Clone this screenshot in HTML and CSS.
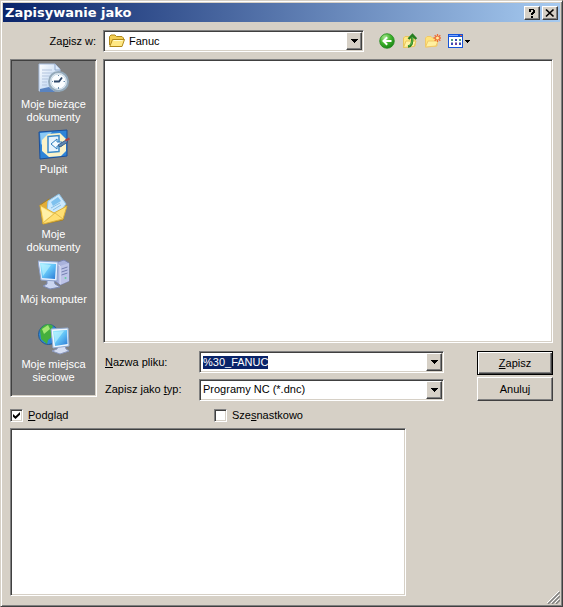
FILE: index.html
```html
<!DOCTYPE html>
<html lang="pl">
<head>
<meta charset="utf-8">
<meta name="viewport" content="width=device-width, initial-scale=1">
<title>Zapisywanie jako</title>
<link rel="stylesheet" href="styles.css">
</head>
<body>
<form class="dialog" onsubmit="return false">
  <header class="titlebar">
    <h1 class="title">Zapisywanie jako</h1>
    <button class="caption-button" type="button" aria-label="Pomoc">
      <svg width="10" height="10" viewBox="0 0 10 10" shape-rendering="crispEdges"><path d="M2 1h5v1h1v3H7v1H6v1H4V5h1V4h1V2H4v2H2zM4 8h2v2H4z"/></svg>
    </button>
    <button class="caption-button caption-close" type="button" aria-label="Zamknij">
      <svg width="10" height="10" viewBox="0 0 10 10"><path d="M1 1.5l7.5 7M8.5 1.5l-7.5 7" stroke="#000" stroke-width="1.7"/></svg>
    </button>
  </header>

  <div class="content">
    <div class="lookin">
      <label class="lookin-label" for="folder">Za<u>p</u>isz w:</label>
      <div class="combo combo-folder">
        <svg class="folder-icon" width="16" height="14" viewBox="0 0 16 14"><path d="M.5 11V2.5L2 1h4l1.500 1.500H13L14.500 4v2" fill="#f4ce52" stroke="#b18919"/><path d="M.8 12.500L3.500 5.500h12L13 12.500z" fill="#ffe884" stroke="#b18919"/><path d="M4.500 6.500h9" stroke="#fffbd0"/></svg>
        <select class="field" id="folder"><option>Fanuc</option></select>
        <span class="arrow"><svg width="7" height="4" viewBox="0 0 7 4" shape-rendering="crispEdges"><path d="M0 0h7v1H6v1H5v1H4v1H3V3H2V2H1V1H0z"/></svg></span>
      </div>
      <div class="tools">
        <button class="tool" type="button" aria-label="Wstecz">
          <svg width="16" height="16" viewBox="0 0 16 16"><defs><radialGradient id="green" cx=".35" cy=".25" r=".8"><stop offset="0" stop-color="#a5e58e"/><stop offset=".5" stop-color="#42b62d"/><stop offset="1" stop-color="#168215"/></radialGradient></defs><circle cx="8" cy="8" r="7.300" fill="url(#green)" stroke="#258b20" stroke-width=".8"/><path d="M12.500 8H5M8.200 4.300L4.500 8l3.700 3.700" fill="none" stroke="#fff" stroke-width="2"/></svg>
        </button>
        <button class="tool" type="button" aria-label="Do góry o jeden poziom">
          <svg width="16" height="16" viewBox="0 0 16 16"><path d="M1.500 14.500V5L3 3.500h4L8.500 5H13v8z" fill="#ffe784" stroke="#e9c55c"/><path d="M1.500 14.500L4 8h10l-2 5.500z" fill="#fff2a5" stroke="#e9c55c"/><path d="M6 13.500c3.500-.5 4.500-3 4.300-10M6.500 6l4-4 3.800 4" fill="none" stroke="#267d21" stroke-width="2.400"/><path d="M6.500 12.900c3-.7 3.900-3 3.700-9" fill="none" stroke="#66c64c"/></svg>
        </button>
        <button class="tool" type="button" aria-label="Utwórz nowy folder">
          <svg width="16" height="16" viewBox="0 0 16 16"><path d="M.5 14V5L2 3.500h4L7.500 5H12v8z" fill="#ffe37a" stroke="#f0c868"/><path d="M.5 14L3 8h10l-2 5z" fill="#fff0a0" stroke="#f0c868"/><path d="M12.500 1v8M8.500 5h7.500M9.700 2.200l5.600 5.600M15.300 2.200L9.700 7.800" stroke="#ed6b35" stroke-width="1.300"/><circle cx="12.500" cy="5" r="1.500" fill="#fff0a0"/></svg>
        </button>
        <button class="tool" type="button" aria-label="Menu Widok">
          <svg width="23" height="16" viewBox="0 0 23 16" shape-rendering="crispEdges"><path fill="#1554d8" d="M0 1h15v14H0z"/><path fill="#fff" d="M1 4h13v10H1z"/><path fill="#78a7ff" d="M1 2h9v1H1z"/><path fill="#e75a34" d="M12 2h2v1h-2z"/><path fill="#4d9a80" d="M3 6h2v2H3zM11 6h2v2h-2z"/><path fill="#3848b8" d="M7 6h2v2H7zM3 10h2v2H3zM11 10h2v2h-2z"/><path fill="#6b3c9d" d="M7 10h2v2H7z"/><path fill="#9cabc3" d="M3 9h2v1H3zM7 9h2v1H7zM11 9h2v1h-2z"/><path d="M17 7h5v1h-1v1h-1v1h-1V9h-1V8h-1z"/></svg>
        </button>
      </div>
    </div>

    <div class="main">
      <nav class="places">
        <a class="place" href="#recent">
          <svg width="32" height="32" viewBox="0 0 32 32"><defs><linearGradient id="paper" x2="1" y2="1"><stop stop-color="#fff"/><stop offset="1" stop-color="#a9c9ef"/></linearGradient><linearGradient id="screen" x2="1" y2="1"><stop stop-color="#a4efff"/><stop offset=".5" stop-color="#62c3f7"/><stop offset="1" stop-color="#2a78d4"/></linearGradient></defs><path d="M1 1h16l5 5v22H1z" fill="url(#paper)" stroke="#a9bedd"/><path d="M17 1v6h5" fill="#dce9fa" stroke="#91aacd"/><path d="M4 7h10M4 10h14M4 13h9M4 16h6M4 19h5M4 22h5" stroke="#b3c4dd"/><path d="M2 26l9-2 6 5H2z" fill="#5983c0"/><circle cx="20.500" cy="18.500" r="9.500" fill="#dfe9f2" stroke="#93a9ba" stroke-width="2"/><circle cx="20.500" cy="18.500" r="7.500" fill="#fafdff" stroke="#c9d9e5"/><path d="M16 18.500h5l3-4" fill="none" stroke="#2d4668" stroke-width="1.800"/><path d="M20.500 12v1M20.500 24v2M27 18.500h-1.500M14 18.500h1" stroke="#6a8dac"/></svg>
          <span>Moje bieżące dokumenty</span>
        </a>
        <a class="place" href="#desktop">
          <svg width="32" height="32" viewBox="0 0 32 32"><path d="M1 4l28-2v26L2 31z" fill="#2e84d8" stroke="#1a4f9a"/><path d="M2 5l12-1-11 13z" fill="#8bcaf5"/><path d="M10 6l12-1 6 6v12l-5 5-12 1-7-6V12z" fill="#fbf3c8"/><path d="M10 8.500l11-1v16l-11 1z" fill="#e6f3fd" stroke="#3c8bc9" stroke-width="1.500"/><path d="M13 16l6-5v3h5v4h-5v3z" fill="#f5fbff" stroke="#2f7fc0"/><path d="M20 17l8-5 2 2-8 5z" fill="#5d87b3" stroke="#30527d" stroke-width=".8"/><path d="M27.500 12.500l4-2" stroke="#a94343" stroke-width="2"/></svg>
          <span>Pulpit</span>
        </a>
        <a class="place" href="#documents">
          <svg width="32" height="32" viewBox="0 0 32 32"><path d="M2 12l9-6 8 4 9 2-3 15-20 4z" fill="#e3ad36" stroke="#a57f25"/><path d="M10 8L21 1l7 10-9 12-10-5z" fill="#cbe8fc" stroke="#8dc1e5"/><path d="M13 9l7-5 3 4-8 5z" fill="#7fc1ee"/><path d="M13 15l9-5M15 17l8-5" stroke="#8abfe5"/><path d="M2 12l14 8L29 13l-4 13-20 5z" fill="#ffdf73" stroke="#dcb13c"/><path d="M3 14l3 14 9-7z" fill="#fff0a8"/><path d="M5 30l12-10 8 6" fill="none" stroke="#e1bb4c"/></svg>
          <span>Moje dokumenty</span>
        </a>
        <a class="place" href="#computer">
          <svg width="32" height="32" viewBox="0 0 32 32"><path d="M17 5l9-3 5 3v18l-9 4-5-4z" fill="#a9b2dc" stroke="#7983b1"/><path d="M22 8l9-3v18l-9 4z" fill="#bdc4e8"/><path d="M17 5l5 3v18" fill="none" stroke="#dfe3f7"/><path d="M23.500 11l6-2M23.500 14l6-2M23.500 17l6-2" stroke="#747fb0"/><circle cx="27.500" cy="20" r="1" fill="#67cda0"/><path d="M9 22h7l1 4 5 3-10 2-7-3 4-2z" fill="#cbd6f0" stroke="#7c8bb6"/><path d="M0 3l20 1-1 19-16-1z" fill="#e4efff" stroke="#8da2cc"/><path d="M2 5l16 1-1 15-13-1z" fill="url(#screen)"/><path d="M3 6l10 1-8 11z" fill="#c2f6ff" opacity=".6"/></svg>
          <span>Mój komputer</span>
        </a>
        <a class="place" href="#network">
          <svg width="32" height="32" viewBox="0 0 32 32"><circle cx="10.500" cy="11.500" r="10" fill="#2f86d8" stroke="#245a8d"/><path d="M2 7c3-6 9-7 13-4l-2 5 2 5-5 4-1 4-6-5z" fill="#45af3c"/><path d="M4 6l6-4 2 4-6 5z" fill="#a3e773"/><path d="M20 23h7l1 3 3 2-9 3-8-3 5-2z" fill="#d5def3" stroke="#8a98bd"/><path d="M13 6l17-1 1 18-16 2z" fill="#eef7ff" stroke="#93abd0"/><path d="M15 8l14-1 .5 14L17 23z" fill="url(#screen)"/><path d="M16 9l10-1-9 12z" fill="#c2f6ff" opacity=".6"/></svg>
          <span>Moje miejsca sieciowe</span>
        </a>
      </nav>

      <div class="browser">
        <div class="files sunken" role="listbox" aria-label="Pliki"></div>
        <div class="save-area">
          <div class="fields">
            <label for="filename"><u>N</u>azwa pliku:</label>
            <div class="combo">
              <input class="field" id="filename" type="text" value="%30_FANUC" autocomplete="off" spellcheck="false" autofocus>
              <span class="arrow"><svg width="7" height="4" viewBox="0 0 7 4" shape-rendering="crispEdges"><path d="M0 0h7v1H6v1H5v1H4v1H3V3H2V2H1V1H0z"/></svg></span>
            </div>
            <label for="filetype">Zapisz jako <u>t</u>yp:</label>
            <div class="combo">
              <select class="field" id="filetype"><option>Programy NC (*.dnc)</option></select>
              <span class="arrow"><svg width="7" height="4" viewBox="0 0 7 4" shape-rendering="crispEdges"><path d="M0 0h7v1H6v1H5v1H4v1H3V3H2V2H1V1H0z"/></svg></span>
            </div>
          </div>
          <div class="actions">
            <button class="button button-default" type="submit"><span><u>Z</u>apisz</span></button>
            <button class="button" type="button">Anuluj</button>
          </div>
        </div>
      </div>
    </div>

    <div class="options">
      <label class="option"><input class="check" type="checkbox" checked><span><u>P</u>odgląd</span></label>
      <label class="option"><input class="check" type="checkbox"><span>Sze<u>s</u>nastkowo</span></label>
    </div>
    <div class="preview sunken"></div>
  </div>
  <svg class="grip" width="13" height="13" viewBox="0 0 13 13"><path d="M1 13L13 1M5 13l8-8M9 13l4-4" stroke="#808080" stroke-width="1.500"/><path d="M0 12L12 0M4 12l8-8M8 12l4-4" stroke="#fff"/></svg>
</form>
<script src="dialog.js"></script>
</body>
</html>
```
FILE: styles.css
```css
:root {
  --face: #d6d0c6;
  --shadow: #808080;
  --dark: #404040;
  --navy: #0a246a;
}

* {
  box-sizing: border-box;
}

body {
  margin: 0;
  font: 11px/13px "Liberation Sans", Arial, sans-serif;
  color: #000;
}

button,
input,
select {
  margin: 0;
  font: inherit;
  color: inherit;
}

svg {
  display: block;
  flex: none;
}

.dialog {
  position: relative;
  display: flex;
  flex-direction: column;
  min-height: 100vh;
  padding: 2px;
  background: var(--face);
  border: 1px solid var(--dark);
  border-top-color: var(--face);
  border-left-color: var(--face);
  box-shadow: inset 1px 1px #fff, inset -1px -1px var(--shadow);
}

.titlebar {
  display: flex;
  align-items: center;
  height: 19px;
  padding: 0 2px;
  background: linear-gradient(to right, var(--navy), #a6caf0);
}

.title {
  flex: 1;
  margin: 0;
  font: bold 13px/16px "DejaVu Sans", Verdana, sans-serif;
  color: #fff;
}

.caption-button,
.arrow,
.button {
  display: flex;
  align-items: center;
  justify-content: center;
  padding: 0;
  background: var(--face);
  border: 1px solid var(--dark);
  border-top-color: #fff;
  border-left-color: #fff;
  border-radius: 0;
  box-shadow: inset -1px -1px var(--shadow);
}

.caption-button {
  width: 16px;
  height: 14px;
}

.caption-close {
  margin-left: 2px;
}

.content {
  display: flex;
  flex: 1;
  flex-direction: column;
  padding: 8px 7px;
}

.lookin {
  display: flex;
  align-items: center;
  margin-bottom: 7px;
}

.lookin-label {
  width: 86px;
  margin-right: 7px;
  text-align: right;
}

.combo {
  position: relative;
  display: flex;
  height: 22px;
  padding: 1px;
  background: #fff;
}

.combo,
.sunken,
.places {
  border: 1px solid #fff;
  border-top-color: var(--shadow);
  border-left-color: var(--shadow);
  box-shadow: inset 1px 1px var(--dark), inset -1px -1px var(--face);
}

.combo-folder {
  flex: 0 1 261px;
}

.folder-icon {
  align-self: center;
  margin-left: 4px;
}

.field {
  flex: 1;
  min-width: 0;
  padding: 0 2px;
  appearance: none;
  background: #fff;
  border: 0;
  border-radius: 0;
  outline: 0;
}

.combo-folder .field {
  padding-left: 4px;
}

.field::selection {
  color: #fff;
  background: var(--navy);
}

.arrow {
  width: 16px;
  pointer-events: none;
}

.tools {
  display: flex;
  gap: 7px;
  margin-left: 15px;
}

.tool {
  padding: 0;
  background: none;
  border: 0;
}

.main {
  display: flex;
  flex: 1;
  gap: 6px;
}

.places {
  display: flex;
  flex: none;
  flex-direction: column;
  width: 87px;
  margin-bottom: 4px;
  padding: 2px 1px;
  background: var(--shadow);
}

.place {
  display: flex;
  flex-direction: column;
  align-items: center;
  gap: 3px;
  height: 65px;
  padding: 1px 8px 0;
  color: #fff;
  text-align: center;
  text-decoration: none;
}

.browser {
  display: flex;
  flex: 1;
  flex-direction: column;
  gap: 8px;
  min-width: 0;
}

.sunken {
  background: #fff;
}

.files {
  flex: 1;
}

.save-area {
  display: flex;
  gap: 33px;
}

.fields {
  display: grid;
  flex: 1;
  grid-template-columns: 94px 1fr;
  gap: 5px 0;
  align-items: center;
  padding-left: 2px;
}

.actions {
  display: flex;
  flex-direction: column;
  gap: 2px;
  width: 76px;
}

.button {
  height: 24px;
}

.button-default {
  border-color: #000;
  box-shadow: inset 1px 1px #fff, inset -1px -1px var(--dark), inset -2px -2px var(--shadow);
}

.options {
  display: flex;
  margin: 8px 0 6px;
}

.option {
  display: flex;
  gap: 5px;
  align-items: center;
  width: 204px;
}

.check {
  width: 13px;
  height: 13px;
  appearance: none;
  background: #fff;
  border: 1px solid #fff;
  border-top-color: var(--shadow);
  border-left-color: var(--shadow);
  box-shadow: inset 1px 1px var(--dark), inset -1px -1px var(--face);
}

.check:checked::before {
  display: block;
  width: 7px;
  height: 7px;
  margin: 2px;
  content: "";
  background: #000;
  clip-path: polygon(0 28%, 36% 60%, 100% 0, 100% 40%, 36% 100%, 0 68%);
}

.preview {
  width: 73%;
  height: 168px;
}

.grip {
  position: absolute;
  right: 2px;
  bottom: 2px;
}
```
FILE: dialog.js
```js
const filename = document.getElementById("filename");
filename.focus();
filename.select();
```
